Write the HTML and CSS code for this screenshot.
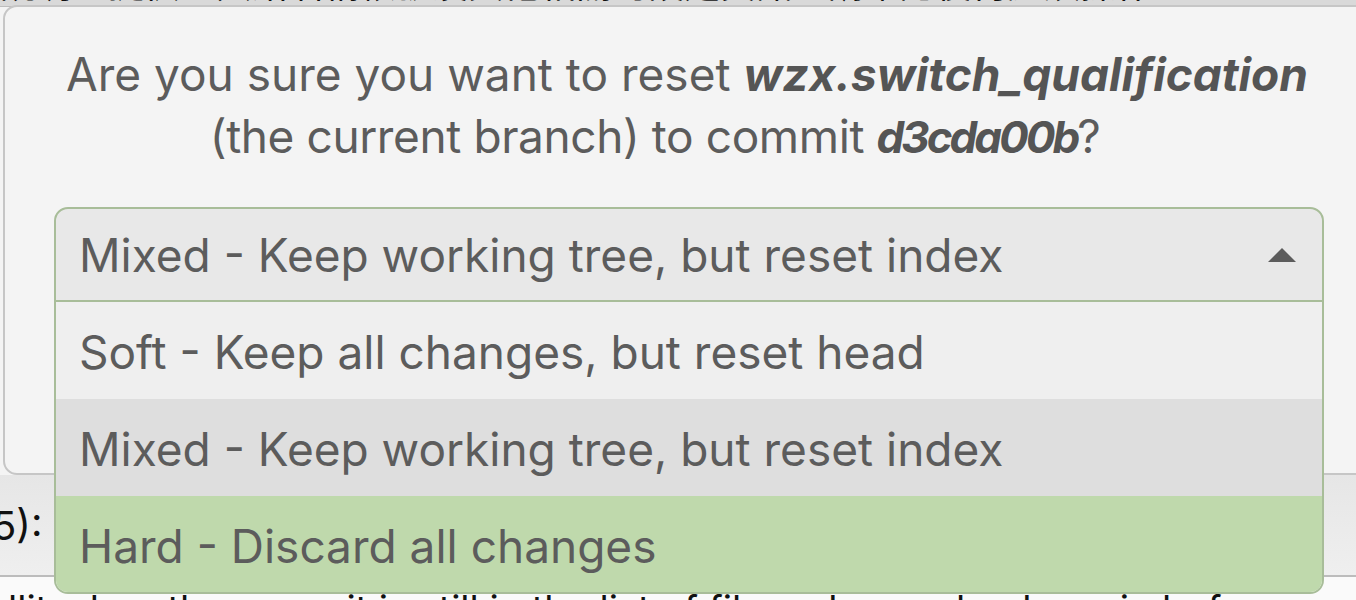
FILE: index.html
```html
<!DOCTYPE html>
<html>
<head>
<meta charset="utf-8">
<link rel="stylesheet" href="styles.css">
</head>
<body>
<div class="page">
  <div class="top-strip"><span class="top-text">說明：提供，只給名稱帳號及其他相關的設定資訊，請確認後再繼續操作。From</span></div>
  <div class="behind"></div>
  <div class="row-mid"><span class="cut">5):</span></div>
  <div class="row-bottom"><span class="bottom-text">llit when the commit is still in the list of files, please check again before continuing</span></div>
</div>

<div class="dialog">
  <p class="message">Are you sure you want to reset <b><i>wzx.switch_qualification</i></b><br><span class="line2">(the current branch) to commit <b class="hash"><i>d3cda00b</i></b>?</span></p>
  <div class="select">
    <div class="select-head">
      <span>Mixed - Keep working tree, but reset index</span>
      <svg class="arrow" width="28" height="14" viewBox="0 0 28 14"><polygon points="14,0 28,14 0,14" fill="#5c5c5c"/></svg>
    </div>
    <div class="options">
      <div class="opt opt-soft">Soft - Keep all changes, but reset head</div>
      <div class="opt opt-mixed">Mixed - Keep working tree, but reset index</div>
      <div class="opt opt-hard">Hard - Discard all changes</div>
    </div>
  </div>
</div>
</body>
</html>
```
FILE: styles.css
```css
html, body {
  margin: 0;
  padding: 0;
}
body {
  width: 1356px;
  height: 600px;
  overflow: hidden;
  position: relative;
  background: #f2f2f2;
  font-family: Inter, "Liberation Sans", "Noto Sans CJK TC", sans-serif;
}
.page {
  display: flex;
  flex-direction: column;
  height: 600px;
}
.top-strip {
  height: 6px;
  overflow: hidden;
  background: #d9d9d9;
  border-bottom: 1px solid #bdbdbd;
}
.top-text {
  display: block;
  margin-top: -35px;
  font-size: 36px;
  line-height: 40px;
  color: #111;
  white-space: nowrap;
}
.behind {
  height: 468px;
  background: #f4f4f4;
}
.row-mid {
  height: 100px;
  background: linear-gradient(#e6e6e6, #efefef);
  display: flex;
  align-items: center;
  border-bottom: 2px solid #bcbcbc;
}
.cut {
  margin-left: -8px;
  font-size: 40px;
  color: #111;
}
.row-bottom {
  flex: 1;
  background: #fafafa;
  overflow: hidden;
}
.bottom-text {
  display: block;
  margin-top: 12px;
  padding-left: 8px;
  font-size: 38px;
  line-height: 40px;
  color: #111;
  white-space: nowrap;
}
.dialog {
  position: absolute;
  left: 3px;
  top: 5px;
  width: 1368px;
  height: 470px;
  background: #f4f4f4;
  border: 2px solid #c6c6c6;
  border-radius: 14px;
  padding: 36px 49px 0 49px;
  box-sizing: border-box;
  color: #5c5c5c;
}
.message {
  margin: 0;
  text-align: center;
  font-size: 46px;
  line-height: 62px;
  white-space: nowrap;
}
.message b {
  font-weight: 700;
  color: #555;
}
.message .hash {
  font-size: 44px;
  letter-spacing: -3px;
}
.line2 {
  display: inline-block;
  padding-right: 64px;
  letter-spacing: -0.4px;
}
.select {
  position: relative;
  margin-top: 39px;
  width: 1270px;
}
.select-head {
  display: flex;
  align-items: center;
  justify-content: space-between;
  height: 91px;
  padding: 0 26px 0 23px;
  background: #e8e8e8;
  border: 2px solid #a8bd99;
  border-radius: 14px 14px 0 0;
  font-size: 46px;
}
.arrow {
  display: block;
}
.options {
  position: absolute;
  top: 100%;
  left: 0;
  right: 0;
  border: 2px solid #a8bd99;
  border-top: none;
  border-radius: 0 0 14px 14px;
  overflow: hidden;
}
.opt {
  height: 97px;
  line-height: 94px;
  padding: 3px 0 0 23px;
  box-sizing: border-box;
  font-size: 46px;
  color: #5c5c5c;
}
.opt-soft { background: #efefef; }
.opt-mixed { background: #dedede; }
.opt-hard { background: #bfd9ac; height: 96px; }
```
